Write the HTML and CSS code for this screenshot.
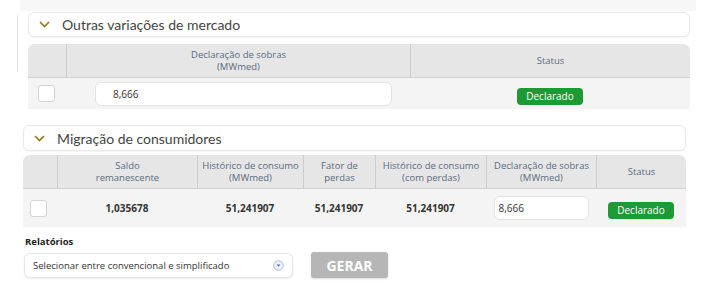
FILE: index.html
```html
<!DOCTYPE html>
<html lang="pt-BR">
<head>
    <meta charset="UTF-8">
    <meta name="viewport" content="width=device-width, initial-scale=1.0">
    <title>Declaração de sobras</title>
    <link rel="stylesheet" href="styles.css">
</head>
<body>
    <div class="top-band"></div>

    <div class="section section-market">
        <div class="section-header">
            <svg class="chevron" width="11" height="7" viewBox="0 0 11 7"><path d="M1 1 L5.5 5.5 L10 1" fill="none" stroke="#8c7a16" stroke-width="1.6"/></svg>
            <span>Outras variações de mercado</span>
        </div>
        <table class="data-table table-market">
            <colgroup>
                <col style="width: 38px">
                <col style="width: 344px">
                <col>
            </colgroup>
            <thead>
                <tr>
                    <th></th>
                    <th>Declaração de sobras<br>(MWmed)</th>
                    <th>Status</th>
                </tr>
            </thead>
            <tbody>
                <tr>
                    <td><span class="checkbox"></span></td>
                    <td class="cell-input"><input class="text-input input-wide" type="text" value="8,666"></td>
                    <td><span class="status-badge">Declarado</span></td>
                </tr>
            </tbody>
        </table>
    </div>

    <div class="section section-migration">
        <div class="section-header">
            <svg class="chevron" width="11" height="7" viewBox="0 0 11 7"><path d="M1 1 L5.5 5.5 L10 1" fill="none" stroke="#8c7a16" stroke-width="1.6"/></svg>
            <span>Migração de consumidores</span>
        </div>
        <table class="data-table table-migration">
            <colgroup>
                <col style="width: 34px">
                <col style="width: 140px">
                <col style="width: 106px">
                <col style="width: 72px">
                <col style="width: 111px">
                <col style="width: 110px">
                <col>
            </colgroup>
            <thead>
                <tr>
                    <th></th>
                    <th>Saldo<br>remanescente</th>
                    <th>Histórico de consumo<br>(MWmed)</th>
                    <th>Fator de<br>perdas</th>
                    <th>Histórico de consumo<br>(com perdas)</th>
                    <th>Declaração de sobras<br>(MWmed)</th>
                    <th>Status</th>
                </tr>
            </thead>
            <tbody>
                <tr>
                    <td><span class="checkbox"></span></td>
                    <td class="num">1,035678</td>
                    <td class="num">51,241907</td>
                    <td class="num">51,241907</td>
                    <td class="num">51,241907</td>
                    <td><input class="text-input input-small" type="text" value="8,666"></td>
                    <td><span class="status-badge">Declarado</span></td>
                </tr>
            </tbody>
        </table>
    </div>

    <div class="reports">
        <div class="reports-label">Relatórios</div>
        <div class="reports-row">
            <div class="select-box">
                <span>Selecionar entre convencional e simplificado</span>
                <svg class="select-icon" width="11" height="11" viewBox="0 0 11 11"><circle cx="5.5" cy="5.5" r="4.8" fill="#eef1fa" stroke="#a9b4d6" stroke-width="0.9"/><path d="M3.6 4.6 L7.4 4.6 L5.5 6.7 Z" fill="#5a6a9a"/></svg>
            </div>
            <button class="generate-button">GERAR</button>
        </div>
    </div>
</body>
</html>
```

FILE: styles.css
```css
body {
    margin: 0;
    font-family: "Open Sans", "Noto Sans", sans-serif;
    background-color: #fff;
    color: #333;
    width: 722px;
    height: 292px;
    overflow: hidden;
}

.top-band {
    margin-left: 20px;
    width: 676px;
    height: 11px;
    background-color: #f7f7f7;
}

.section {
    position: relative;
}

.section-market {
    margin: 1px 0 0 28px;
    width: 662px;
}

.section-market::before {
    content: "";
    position: absolute;
    left: -11px;
    top: 3px;
    width: 1px;
    height: 56px;
    background-color: #e2e2e2;
}

.section-migration {
    margin: 16px 0 0 23px;
    width: 663px;
}

.section-header {
    display: flex;
    align-items: center;
    height: 23px;
    border: 1px solid #e8e8e8;
    border-radius: 6px;
    background-color: #fff;
    box-shadow: 0 1px 1px rgba(0, 0, 0, 0.04);
    font-family: Lato, "Open Sans", sans-serif;
    font-size: 14px;
    color: #444;
}

.section-migration .section-header {
    height: 24px;
}

.chevron {
    margin: 0 12px 0 10px;
}

.data-table {
    width: 100%;
    table-layout: fixed;
    border-collapse: separate;
    border-spacing: 0;
    margin-top: 7px;
}

.section-migration .data-table {
    margin-top: 4px;
}

.data-table th {
    background-color: #e6e6e6;
    color: #5b6a80;
    font-size: 9.5px;
    font-weight: normal;
    line-height: 12px;
    height: 33px;
    padding: 0;
    white-space: nowrap;
    text-align: center;
    border-left: 1px solid #cdcdcd;
    border-bottom: 1px solid #d2d2d2;
}

.data-table th:first-child {
    border-left: none;
    border-top-left-radius: 7px;
}

.data-table th:last-child {
    border-top-right-radius: 7px;
}

.data-table td {
    background-color: #f4f4f4;
    text-align: center;
    padding: 0;
}

.table-market td {
    height: 31px;
}

.table-migration td {
    height: 38px;
}

.checkbox {
    display: block;
    width: 15px;
    height: 15px;
    margin-left: 10px;
    background-color: #fff;
    border: 1px solid #d4d4d4;
    border-radius: 3px;
}

.table-migration .checkbox {
    margin-left: 7px;
}

.cell-input {
    text-align: left;
}

.text-input {
    box-sizing: border-box;
    height: 24px;
    border: 1px solid #e3e3e3;
    border-radius: 6px;
    background-color: #fff;
    font-family: "Open Sans", "Noto Sans", sans-serif;
    font-size: 10px;
    color: #333;
    padding: 0 0 0 17px;
    outline: none;
}

.input-wide {
    width: 297px;
    margin-left: 11px;
}

.input-small {
    width: 95px;
    padding-left: 4px;
    vertical-align: middle;
}

.status-badge {
    display: inline-block;
    background-color: #1e9a35;
    color: #fff;
    font-size: 10px;
    line-height: 17px;
    padding: 0 8px;
    border-radius: 4px;
    width: 50px;
}

.num {
    font-size: 10px;
    font-weight: bold;
    color: #333;
}

.reports {
    margin: 8px 0 0 25px;
}

.reports-label {
    font-size: 9.5px;
    font-weight: bold;
    color: #222;
}

.reports-row {
    display: flex;
    align-items: center;
    gap: 18px;
    margin-top: 4px;
    margin-left: -1px;
}

.select-box {
    box-sizing: border-box;
    display: flex;
    align-items: center;
    justify-content: space-between;
    width: 269px;
    height: 25px;
    padding: 0 8px 0 8px;
    border: 1px solid #e5e5e5;
    border-radius: 6px;
    background-color: #fff;
    box-shadow: 0 1px 2px rgba(0, 0, 0, 0.08);
    font-size: 9.5px;
    color: #333;
}

.generate-button {
    width: 77px;
    height: 26px;
    border: none;
    border-radius: 3px;
    background-color: #b6b6b6;
    color: #fff;
    font-family: "Open Sans", "Noto Sans", sans-serif;
    font-size: 14px;
    font-weight: bold;
    box-shadow: 0 1px 2px rgba(0, 0, 0, 0.15);
}
```
